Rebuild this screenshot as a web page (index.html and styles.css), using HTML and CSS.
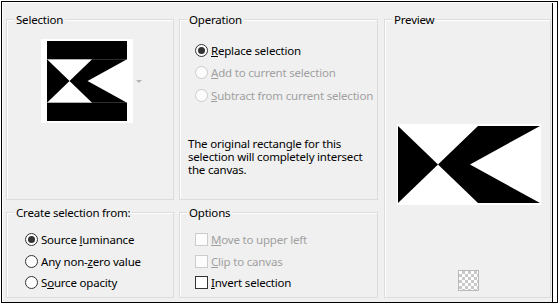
FILE: index.html
```html
<!DOCTYPE html>
<html lang="en">
<head>
    <meta charset="UTF-8">
    <meta name="viewport" content="width=device-width, initial-scale=1.0">
    <title>Selection from mask</title>
    <link rel="stylesheet" href="styles.css">
</head>
<body>
    <div class="frame">
        <div class="dialog">

            <section class="group group-sel">
                <span class="group-title">Selection</span>
                <div class="thumb-row">
                    <div class="thumb">
                        <svg width="80" height="80" viewBox="0 -32.5 142 142">
                            <rect x="0" y="-32.5" width="142" height="142" fill="#000"/>
                            <rect x="0" y="0" width="142" height="77" fill="#fff"/>
                            <polygon points="0,0 40,38.5 0,77" fill="#000"/>
                            <polygon points="80,0 142,0 72,38.5 142,77 80,77 40,38.5" fill="#000"/>
                        </svg>
                    </div>
                    <span class="drop"></span>
                </div>
            </section>

            <section class="group group-op">
                <span class="group-title">Operation</span>
                <ul class="choices">
                    <li class="radio checked"><span class="mark"></span><span><u>R</u>eplace selection</span></li>
                    <li class="radio disabled"><span class="mark"></span><span><u>A</u>dd to current selection</span></li>
                    <li class="radio disabled"><span class="mark"></span><span><u>S</u>ubtract from current selection</span></li>
                </ul>
                <p class="note">The original rectangle for this<br>selection will completely intersect<br>the canvas.</p>
            </section>

            <section class="group group-preview">
                <span class="group-title">Preview</span>
                <svg class="preview-img" width="144" height="81" viewBox="-1 -2 144 81">
                    <rect x="-1" y="-2" width="144" height="81" fill="#fff"/>
                    <polygon points="0,0 40,38.5 0,77" fill="#000"/>
                    <polygon points="80,0 142,0 72,38.5 142,77 80,77 40,38.5" fill="#000"/>
                </svg>
                <span class="checker"></span>
            </section>

            <section class="group group-create">
                <span class="group-title">Create selection from:</span>
                <ul class="choices">
                    <li class="radio checked"><span class="mark"></span><span>Source <u>l</u>uminance</span></li>
                    <li class="radio"><span class="mark"></span><span>Any non-<u>z</u>ero value</span></li>
                    <li class="radio"><span class="mark"></span><span>S<u>o</u>urce opacity</span></li>
                </ul>
            </section>

            <section class="group group-options">
                <span class="group-title">Options</span>
                <ul class="choices">
                    <li class="check disabled"><span class="mark"></span><span><u>M</u>ove to upper left</span></li>
                    <li class="check disabled"><span class="mark"></span><span><u>C</u>lip to canvas</span></li>
                    <li class="check"><span class="mark"></span><span><u>I</u>nvert selection</span></li>
                </ul>
            </section>

        </div>
    </div>
</body>
</html>
```

FILE: styles.css
```css
html{
    box-sizing: border-box;
    font-family: "Noto Sans", "Open Sans", sans-serif;
    font-size: 11.5px;
    letter-spacing: -0.2px;
}

*,
*:after,
*:before{
    box-sizing: inherit;
}

body{
    margin: 0;
    background-color: #fff;
    color: #000;
}

u{
    text-decoration: underline;
    text-underline-offset: 1px;
}

.frame{
    margin: 1px 0 0 1px;
    width: 557px;
    height: 302px;
    border: 1px solid #000;
    background-color: #fff;
}

.dialog{
    margin: 1px 0 0 1px;
    width: 550px;
    height: 299px;
    padding: 16px 0 4px 3px;
    background-color: #f0f0f0;
    border-right: 1px solid #000;
    display: grid;
    grid-template-columns: 168px 200px 167px;
    grid-template-rows: 181px 86px;
    column-gap: 5px;
    row-gap: 12px;
    grid-template-areas:
        "sel op preview"
        "create options preview";
}

.group{
    border: 1px solid #dcdcdc;
    box-shadow: inset 1px 1px 0 #fff;
}

.group-title{
    display: table;
    margin: -8px 0 0 7px;
    padding: 0 2px;
    line-height: 16px;
    background-color: #f0f0f0;
    white-space: nowrap;
}

.group-sel{ grid-area: sel; }
.group-op{ grid-area: op; margin-right: 1px; }
.group-preview{ grid-area: preview; }
.group-create{ grid-area: create; }
.group-options{ grid-area: options; margin-right: 1px; }

/* selection thumbnail */
.thumb-row{
    display: flex;
    align-items: center;
    margin: 11px 0 0 34px;
}

.thumb{
    width: 92px;
    height: 84px;
    padding: 2px 6px;
    background-color: #fff;
}

.thumb svg{
    display: block;
}

.drop{
    margin-left: 3px;
    width: 0;
    height: 0;
    border-left: 3px solid transparent;
    border-right: 3px solid transparent;
    border-top: 3px solid #b4b4b4;
}

/* radio and checkbox lists */
.choices{
    list-style: none;
    margin: 0;
    padding: 0;
}

.choices li{
    display: flex;
    align-items: center;
    gap: 3px;
    white-space: nowrap;
}

.group-op .choices{
    margin: 11px 0 0 15px;
}

.group-op .choices li{
    height: 22.5px;
}

.group-create .choices,
.group-options .choices{
    margin-top: 8px;
}

.group-create .choices{
    margin-left: 18px;
}

.group-options .choices{
    margin-left: 15px;
}

.group-create .choices li,
.group-options .choices li{
    height: 21.5px;
}

.mark{
    flex: none;
    width: 13px;
    height: 13px;
    border: 1px solid #333;
    background-color: #fff;
    display: flex;
    align-items: center;
    justify-content: center;
}

.radio .mark{
    border-radius: 50%;
}

.radio.checked .mark:after{
    content: "";
    width: 7px;
    height: 7px;
    border-radius: 50%;
    background-color: #333;
}

.disabled{
    color: #a0a0a0;
}

.disabled .mark{
    border-color: #cccccc;
    background-color: #fcfcfc;
}

.note{
    margin: 30px 0 0 8px;
    line-height: 13px;
    white-space: nowrap;
}

/* preview */
.preview-img{
    display: block;
    margin: 96px 0 0 12px;
}

.checker{
    display: block;
    margin: 65px 0 0 73px;
    width: 21px;
    height: 21px;
    border: 1px solid #b9b9b9;
    background: repeating-conic-gradient(#c9c9c9 0 25%, #fff 0 50%) 0 0 / 6px 6px;
}
```
